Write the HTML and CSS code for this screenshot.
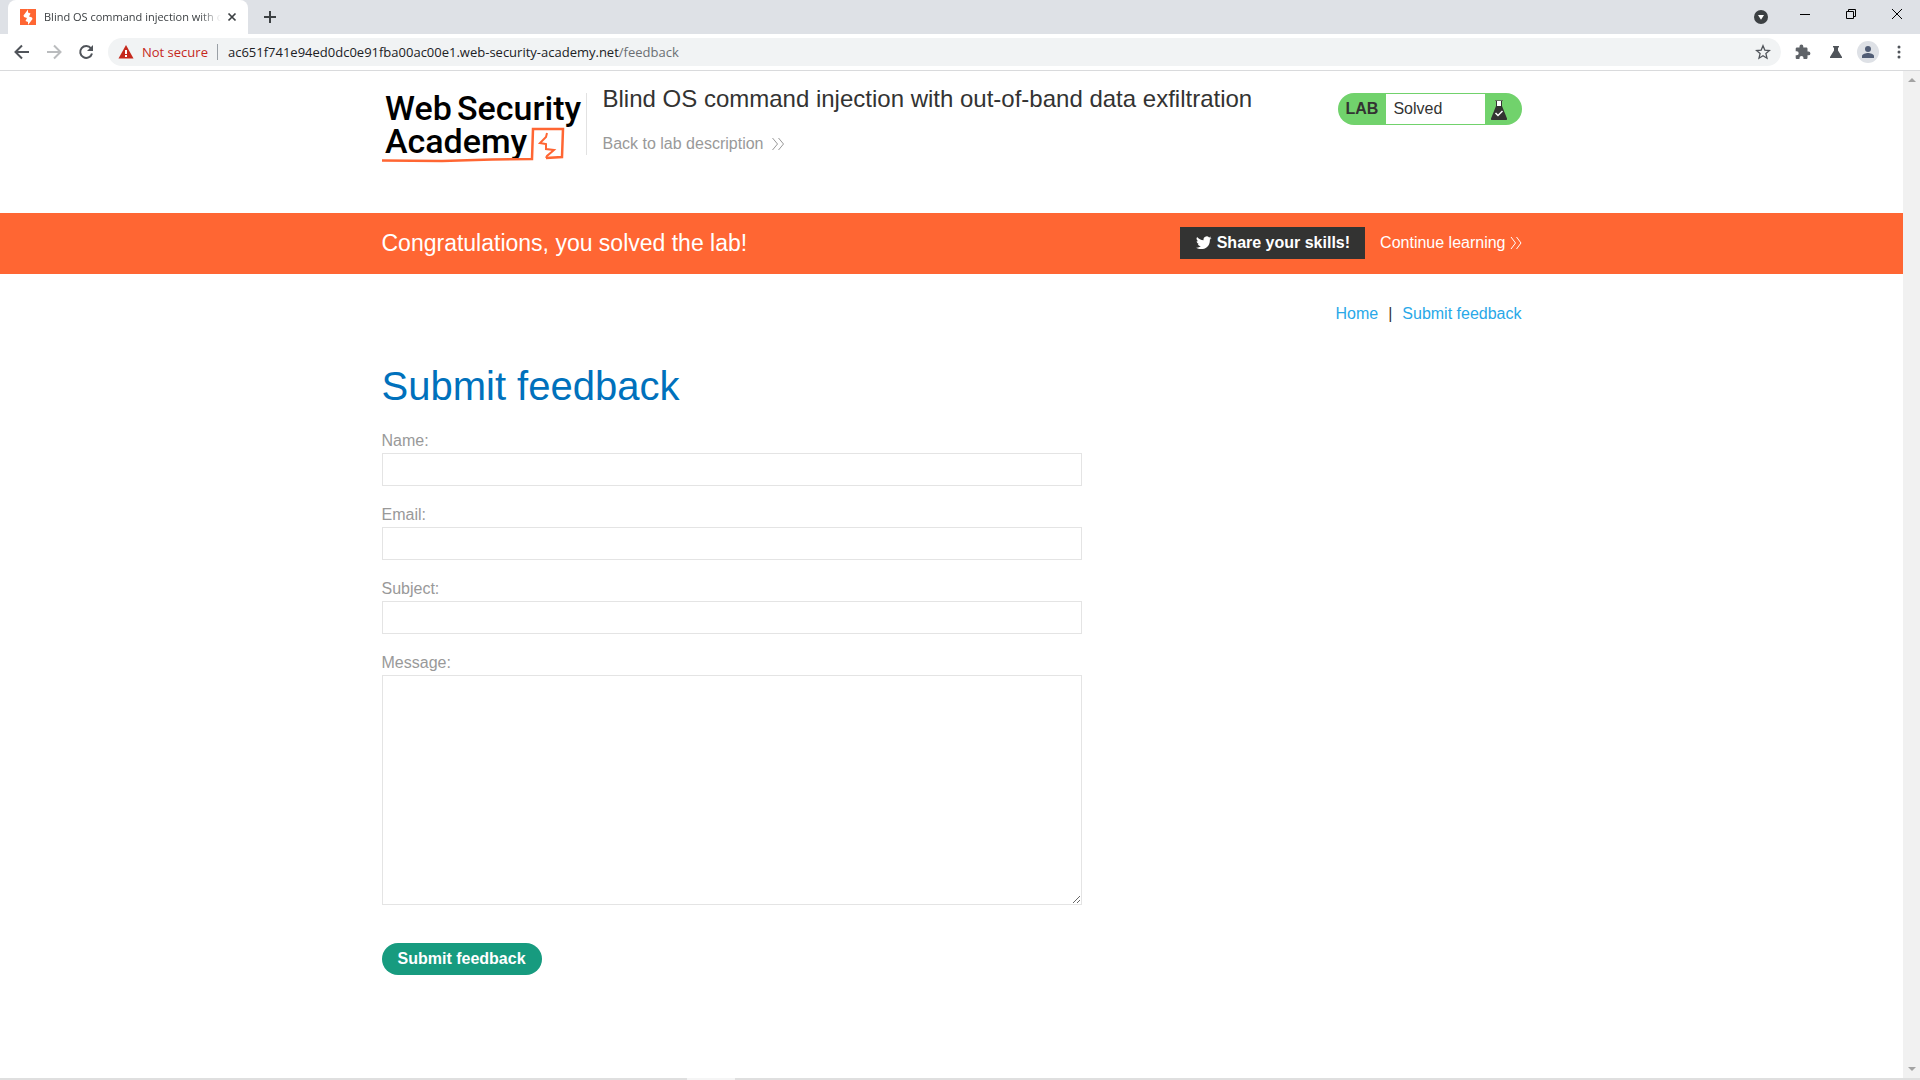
FILE: index.html
```html
<!DOCTYPE html>
<html lang="en">
<head>
<meta charset="utf-8">
<title>Blind OS command injection with out-of-band data exfiltration</title>
<link rel="stylesheet" href="styles.css">
</head>
<body>
<div class="browser">
  <div class="tabstrip">
    <div class="tab">
      <svg class="favicon" width="16" height="16" viewBox="0 0 16 16"><path fill="#ff6633" d="M0 0h16v16H0z"/><path fill="#fff" d="M8 0.500L3.500 6.500 4 8l3 1-1.500 3 2.500 1v3l4.500-6-.5-1.500-3-1L10.500 4.500 8 3.500z"/></svg>
      <span class="tab-title">Blind OS command injection with out-of-band</span>
      <button class="tab-close" aria-label="Close tab"><svg width="10" height="10" viewBox="0 0 10 10"><path d="M1.500 1.500l7 7m0-7l-7 7" stroke="#3c4043" stroke-width="1.700"/></svg></button>
    </div>
    <button class="new-tab" aria-label="New tab"><svg width="12" height="12" viewBox="0 0 12 12"><path d="M6 0v12M0 6h12" stroke="#3c4043" stroke-width="2"/></svg></button>
    <div class="window-controls">
      <button aria-label="Search tabs"><svg width="14" height="14" viewBox="0 0 14 14"><circle cx="7" cy="7" r="7" fill="#3c4043"/><path d="M4 5h6L7 9.800z" fill="#fff"/></svg></button>
      <button aria-label="Minimize"><svg width="12" height="12" viewBox="0 0 12 12"><path d="M1 6.500h10" stroke="#000"/></svg></button>
      <button aria-label="Restore"><svg width="12" height="12" viewBox="0 0 12 12"><path d="M1.500 3.500h7v7h-7zM3.500 3.500v-2h7v7h-2" fill="none" stroke="#000"/></svg></button>
      <button aria-label="Close"><svg width="12" height="12" viewBox="0 0 12 12"><path d="M1 1l10 10M11 1L1 11" stroke="#000"/></svg></button>
    </div>
  </div>

  <div class="toolbar">
    <div class="nav-buttons">
      <button aria-label="Back"><svg width="16" height="16" viewBox="0 0 16 16"><path d="M15 8H2M8 1.500L1.500 8 8 14.500" fill="none" stroke="#50545a" stroke-width="2"/></svg></button>
      <button aria-label="Forward"><svg width="16" height="16" viewBox="0 0 16 16"><path d="M1 8h13M8 1.500L14.500 8 8 14.500" fill="none" stroke="#babcbe" stroke-width="2"/></svg></button>
      <button aria-label="Reload"><svg width="16" height="16" viewBox="0 0 16 16"><path d="M13 4.300A6 6 0 1 0 14 9.500" fill="none" stroke="#50545a" stroke-width="2"/><path d="M15 1v6H9z" fill="#50545a"/></svg></button>
    </div>
    <div class="omnibox">
      <svg width="16" height="14" viewBox="0 0 16 14"><path d="M8 0l7.500 13.500H.5z" fill="#c5281c"/><path d="M7 5h2v4H7zM7 10h2v2H7z" fill="#fff"/></svg>
      <span class="not-secure">Not secure</span>
      <div class="url" role="textbox" aria-label="Address" contenteditable="true" spellcheck="false">ac651f741e94ed0dc0e91fba00ac00e1.web-security-academy.net<span class="url-path">/feedback</span></div>
      <button aria-label="Bookmark"><svg width="16" height="16" viewBox="0 0 16 16"><path d="M8 1.800l1.800 4.300 4.700.4-3.600 3.100 1.100 4.600L8 11.800l-4 2.400 1.100-4.600-3.600-3.100 4.700-.4z" fill="none" stroke="#50545a" stroke-width="1.300"/></svg></button>
    </div>
    <div class="extensions">
      <button aria-label="Extensions"><svg width="16" height="16" viewBox="0 0 16 16"><path fill="#5f6368" d="M13.500 7.500h-1V4.800c0-.8-.6-1.300-1.300-1.300H8.300V2.400a1.900 1.900 0 0 0-3.800 0v1.100H2c-.8 0-1.300.6-1.300 1.300v2.500h1a2 2 0 0 1 0 4h-1v2.400c0 .8.500 1.300 1.300 1.300h2.500v-1a2 2 0 0 1 4 0v1h2.700c.7 0 1.300-.5 1.300-1.300v-2.400h1a1.900 1.900 0 0 0 0-3.800z"/></svg></button>
      <button aria-label="Labs"><svg width="14" height="14" viewBox="0 0 14 14"><path fill="#50545a" d="M4 1h6v1.500H9V5.500L13 12v1H1v-1L5 5.500v-3H4z"/></svg></button>
      <button class="profile" aria-label="Profile"><svg width="22" height="22" viewBox="0 0 22 22"><circle cx="11" cy="11" r="11" fill="#dee1e6"/><circle cx="11" cy="8" r="3" fill="#515d75"/><path fill="#515d75" d="M5 17v-2c0-2 4-3 6-3s6 1 6 3v2z"/></svg></button>
      <button aria-label="Menu"><svg width="4" height="14" viewBox="0 0 4 14"><g fill="#50545a"><circle cx="2" cy="2" r="1.500"/><circle cx="2" cy="7" r="1.500"/><circle cx="2" cy="12" r="1.500"/></g></svg></button>
    </div>
  </div>

  <div class="viewport">
    <div class="page">
      <header class="container lab-header">
        <svg class="logo" width="205" height="80" viewBox="0 0 205 80" role="img" aria-label="Web Security Academy">
          <g class="logo-text"><text x="3" y="34">Web</text><text x="75" y="34">Security</text><text x="3" y="67">Academy</text></g>
          <g fill="none" stroke="#ff6633"><path stroke-width="2.500" d="M0 74.500L60 75l50-1.500 40-.5 1-30h30l-1 28-16 1"/><path stroke-width="2" d="M165 47l-1 4-6 6 6 1v5l8 1-7 6-1 2"/></g>
          <path d="M204.500 7v62" stroke="#e2e2e2"/>
        </svg>
        <div class="lab-title">
          <h2>Blind OS command injection with out-of-band data exfiltration</h2>
          <a class="back-link" href="#">Back to lab description <svg width="14" height="14" viewBox="0 0 14 14"><path d="M1.500 1l5 6-5 6M7.500 1l5 6-5 6" fill="none" stroke="currentColor"/></svg></a>
        </div>
        <div class="lab-status">
          <strong>LAB</strong>
          <p>Solved</p>
          <svg width="18" height="22" viewBox="0 0 18 22"><path d="M6 1.500h6V7l5 12.500q.5 1.500-1 1.500H2q-1.500 0-1-1.500L6 7z" fill="#333332"/><path d="M5 1.500h8" stroke="#65795f"/><path d="M7 2h4v5H7z" fill="#fff"/><path d="M5.500 14l2.500 2.500 4.500-4.500" fill="none" stroke="#fff" stroke-width="1.500"/></svg>
        </div>
      </header>

      <section class="banner">
        <div class="container banner-row">
          <p class="congrats">Congratulations, you solved the lab!</p>
          <button class="share"><svg width="16" height="14" viewBox="0 0 16 14"><path fill="#fff" d="M15.500 1.900c-.6.300-1.200.4-1.800.5.700-.4 1.100-1 1.400-1.800-.6.400-1.300.6-2 .8A3.200 3.200 0 0 0 7.600 4.300C5 4.200 2.600 2.900 1.100 1A3.200 3.200 0 0 0 2.100 5.300c-.5 0-1-.2-1.400-.4 0 1.600 1 2.900 2.500 3.200-.5.100-1 .1-1.400 0 .4 1.300 1.600 2.200 3 2.200A6.400 6.400 0 0 1 0 11.700C4.800 14.800 13.900 13 13.900 3.900v-.4c.6-.4 1.200-1 1.600-1.600z"/></svg>Share your skills!</button>
          <a class="continue" href="#">Continue learning <svg width="12" height="14" viewBox="0 0 12 14"><path d="M1 1l4.500 6L1 13M6.500 1L11 7l-4.500 6" fill="none" stroke="currentColor"/></svg></a>
        </div>
      </section>

      <main class="container">
        <nav class="links"><a href="#">Home</a><span>|</span><a href="#">Submit feedback</a></nav>
        <h1>Submit feedback</h1>
        <form class="feedback">
          <div class="field"><label for="name">Name:</label><input id="name" type="text"></div>
          <div class="field"><label for="email">Email:</label><input id="email" type="email"></div>
          <div class="field"><label for="subject">Subject:</label><input id="subject" type="text"></div>
          <div class="field"><label for="message">Message:</label><textarea id="message"></textarea></div>
          <button class="submit" type="button">Submit feedback</button>
        </form>
      </main>
    </div>
    <div class="scrollbar">
      <svg width="17" height="17" viewBox="0 0 17 17"><path d="M5 11h8L9 7z" fill="#a3a3a3"/></svg>
      <svg width="17" height="17" viewBox="0 0 17 17"><path d="M5 6h8l-4 4z" fill="#a3a3a3"/></svg>
    </div>
  </div>
  <div class="bottom-edge"><span></span></div>
</div>
</body>
</html>
```
FILE: styles.css
```css
* { box-sizing: border-box; }
body { margin: 0; font: 16px/22px "Liberation Sans", Arial, sans-serif; color: #333332; background: #fff; }
h1, h2, p { margin: 0; font-weight: normal; }
button { border: 0; padding: 0; background: none; font: inherit; color: inherit; cursor: pointer; }
svg { display: block; flex: none; }
a { text-decoration: none; }

.browser { display: flex; flex-direction: column; min-height: 100vh; }

/* Tab strip */
.tabstrip { display: flex; height: 34px; padding-left: 8px; background: #dee1e6; font: 12px/16px "Open Sans", sans-serif; }
.tab { display: flex; align-items: center; width: 240px; padding: 0 11px 0 12px; border-radius: 8px 8px 0 0; background: #fff; }
.tab-title { flex: 1; min-width: 0; margin: 0 6px 0 8px; overflow: hidden; white-space: nowrap; font-size: 11px; color: #3c4043; -webkit-mask-image: linear-gradient(to right, #000 88%, transparent); mask-image: linear-gradient(to right, #000 88%, transparent); }
.new-tab { padding: 0 16px; }
.window-controls { display: flex; align-items: center; margin-left: auto; padding-bottom: 6px; }
.window-controls button { display: flex; align-items: center; justify-content: center; width: 46px; height: 28px; }
.window-controls button:first-child { width: 42px; padding-top: 6px; }

/* Toolbar */
.toolbar { display: flex; align-items: center; height: 37px; padding: 0 19px 0 14px; border-bottom: 1px solid #d9dadc; font: 13px/18px "Open Sans", sans-serif; }
.nav-buttons { display: flex; gap: 16px; margin-right: 14px; }
.omnibox { display: flex; flex: 1; align-items: center; height: 28px; padding: 0 10px; border-radius: 14px; background: #f1f3f4; }
.not-secure { margin-left: 8px; padding-right: 9px; border-right: 1px solid #9aa0a6; line-height: 16px; color: #c5281c; }
.url { flex: 1; margin-left: 10px; outline: 0; color: #202124; }
.url-path { color: #6b6f73; }
.extensions { display: flex; align-items: center; gap: 18px; margin-left: 14px; }
.profile { margin: 0 0 0 -4px; }

/* Page */
.viewport { display: flex; flex: 1; }
.page { flex: 1; }
.container { width: 100%; max-width: 1140px; margin: 0 auto; }
.scrollbar { display: flex; flex-direction: column; justify-content: space-between; width: 17px; background: #f1f1f1; }
.bottom-edge { height: 2px; padding-left: 687px; background: #dfdfdf; }
.bottom-edge span { display: block; width: 48px; height: 2px; background: #f5f5f5; }

.lab-header { display: flex; align-items: flex-start; min-height: 142px; padding-top: 15px; }
.logo-text { font: 500 34px Roboto, sans-serif; fill: #000; }
.lab-title { flex: 1; margin-left: 16px; }
.lab-title h2 { font-size: 24px; line-height: 26px; }
.back-link { display: inline-flex; align-items: center; gap: 8px; margin-top: 21px; color: #999; }
.lab-status { display: flex; align-items: stretch; width: 184px; height: 32px; margin-top: 7px; padding: 1px; border-radius: 16px; background: #71d26c; line-height: 30px; }
.lab-status strong { padding: 0 8px 0 7px; }
.lab-status p { flex: 1; padding-left: 7px; background: #fff; }
.lab-status svg { margin: 5px 13px 0 5px; }

.banner { background: #ff6633; color: #fff; }
.banner-row { display: flex; align-items: center; min-height: 61px; padding-bottom: 2px; }
.congrats { flex: 1; font-size: 23px; line-height: 28px; }
.share { display: flex; align-items: center; gap: 5px; height: 32px; padding: 0 15px 0 16px; background: #333332; font-weight: bold; }
.continue { display: flex; align-items: center; gap: 4px; margin-left: 15px; color: #fff; }

.links { display: flex; justify-content: flex-end; gap: 10px; padding: 29px 0 37px; }
.links a { color: #29a8e8; }
h1 { font-size: 40px; line-height: 48px; color: #0071bc; }
.feedback { display: flex; flex-direction: column; gap: 17px; width: 100%; max-width: 700px; margin-top: 19px; }
.field { display: flex; flex-direction: column; }
.field label { line-height: 24px; color: #999; }
.field input, .field textarea { width: 100%; height: 33px; margin: 0; padding: 6px; border: 1px solid #e4e4e4; background: #fff; font: inherit; outline: 0; }
.field textarea { height: 230px; }
.submit { align-self: flex-start; height: 32px; margin-top: 21px; padding: 0 16px; border-radius: 16px; background: #179b7f; color: #fff; font-weight: bold; }
```
